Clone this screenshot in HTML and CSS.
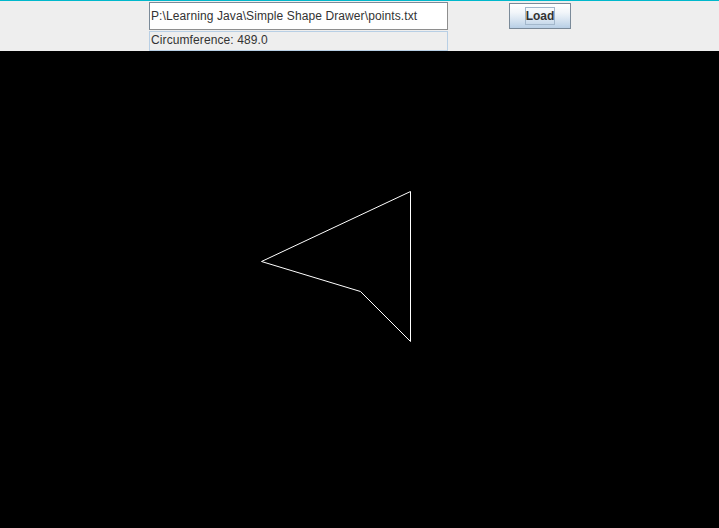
FILE: index.html
```html
<!DOCTYPE html>
<html>
<head>
<meta charset="utf-8">
<link rel="stylesheet" href="styles.css">
</head>
<body>
<div class="app">
  <div class="toolbar">
    <div class="fields">
      <div class="textfield">P:\Learning Java\Simple Shape Drawer\points.txt</div>
      <div class="label">Circumference: 489.0</div>
    </div>
    <button class="btn"><span class="focus">Load</span></button>
  </div>
  <div class="canvas">
    <svg class="shape" width="719" height="477" viewBox="0 0 719 477">
      <polygon points="410.5,140.5 261.5,210.5 360.5,240.5 410.5,290.5" fill="none" stroke="#ffffff" stroke-width="1"/>
    </svg>
  </div>
</div>
</body>
</html>
```
FILE: styles.css
```css
html, body {
  margin: 0;
  padding: 0;
  width: 719px;
  height: 528px;
  overflow: hidden;
  background: #000;
}
.app {
  display: flex;
  flex-direction: column;
  width: 719px;
  height: 528px;
}
.toolbar {
  height: 50px;
  background: #eeeeee;
  border-top: 1px solid #00b8cc;
  display: flex;
  align-items: flex-start;
  padding-left: 149px;
  gap: 61px;
  font-family: "Liberation Sans", Arial, sans-serif;
  font-size: 12px;
  letter-spacing: 0.1px;
  color: #333333;
}
.fields {
  width: 299px;
  display: flex;
  flex-direction: column;
  padding-top: 1px;
}
.textfield {
  box-sizing: border-box;
  height: 28px;
  background: #ffffff;
  border: 1px solid #7a8a99;
  border-right-color: #8e8e8e;
  border-bottom-color: #8e8e8e;
  padding: 0 1px;
  line-height: 26px;
  white-space: nowrap;
}
.label {
  box-sizing: border-box;
  height: 20px;
  margin-top: 1px;
  border: 1px solid #b8cfe5;
  padding: 0 1px;
  line-height: 16px;
  white-space: nowrap;
}
.btn {
  margin-top: 2px;
  box-sizing: border-box;
  width: 62px;
  height: 26px;
  border: 1px solid #7a8a99;
  background: linear-gradient(to bottom, #ffffff 0%, #f2f6fa 35%, #dde8f3 60%, #b8cfe5 100%);
  padding: 0;
  display: flex;
  align-items: center;
  justify-content: center;
  font-family: "Liberation Sans", Arial, sans-serif;
  font-size: 12px;
  font-weight: bold;
  color: #333333;
}
.focus {
  border: 1px solid #a3b8cc;
  padding: 1px 0;
  line-height: 14px;
}
.canvas {
  flex: 1;
  background: #000;
}
.shape {
  display: block;
}
```
